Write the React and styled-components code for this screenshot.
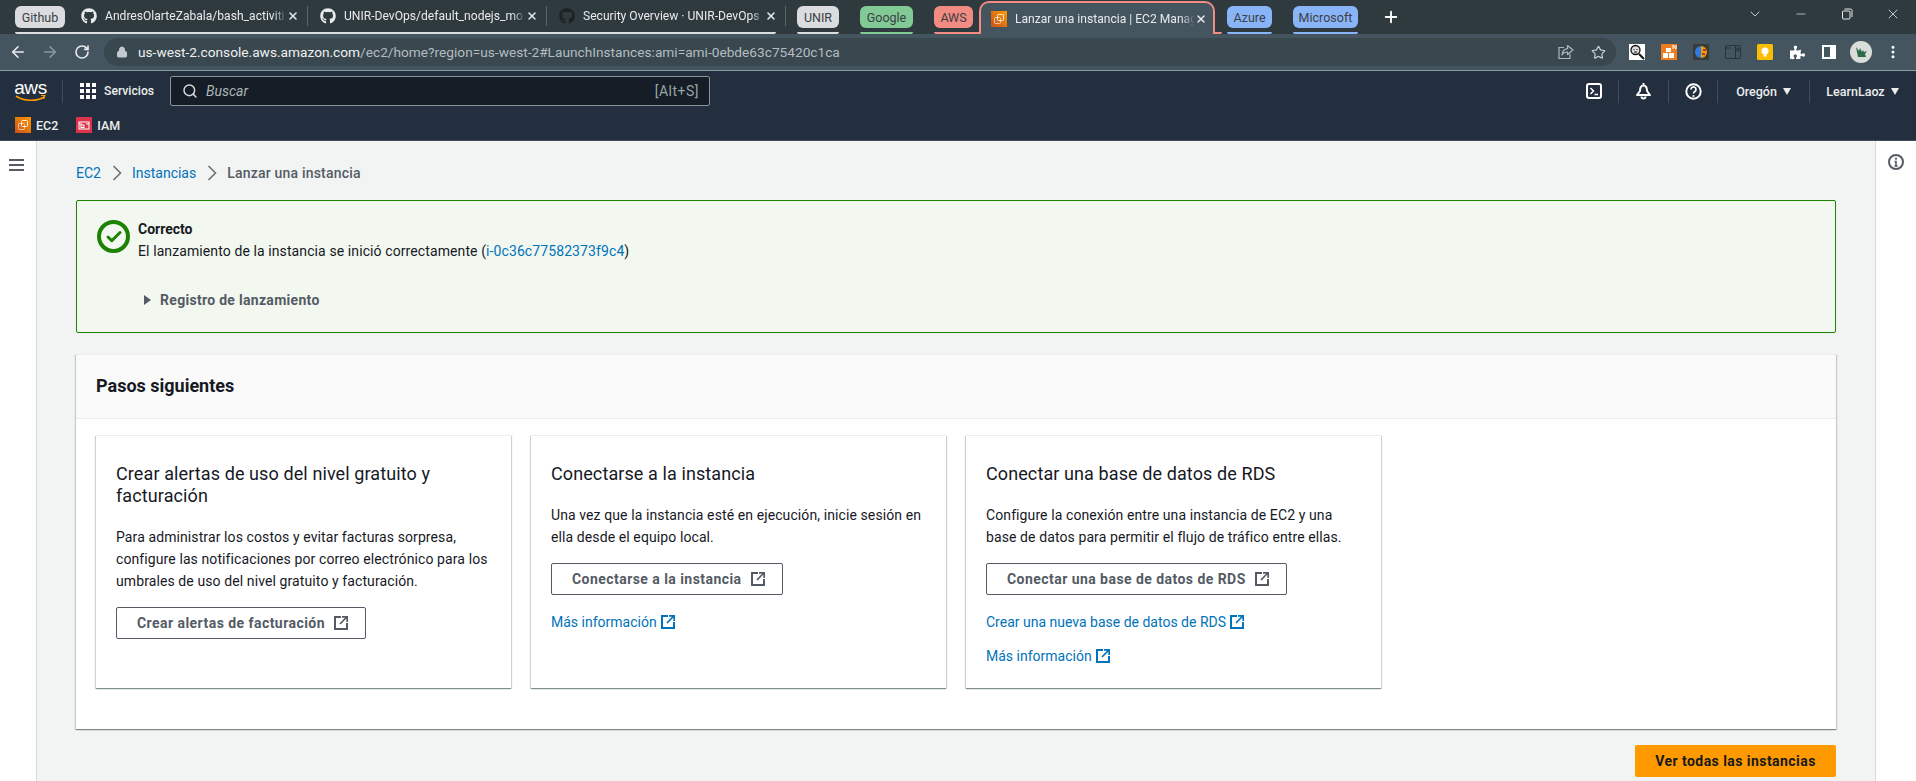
import React from 'react';
import styled, { createGlobalStyle } from 'styled-components';
import { FaGithub, FaPuzzlePiece } from 'react-icons/fa';
import {
  ArrowLeft, ArrowRight, RotateCw, Lock, Star, X, Plus, ChevronDown,
  Minus, Search, MoreVertical, Check,
} from 'lucide-react';

const GlobalStyle = createGlobalStyle`
  html, body {
    margin: 0;
    height: 100%;
    overflow: hidden;
    background: #f2f3f3;
    font-family: Roboto, "Noto Sans", Arial, sans-serif;
    color: #16191f;
  }
  * { box-sizing: border-box; }
`;

/* ---------- browser tabs ---------- */

const TabStrip = styled.div`
  display: flex;
  align-items: stretch;
  height: 34px;
  padding-left: 15px;
  background: #2f3a3f;
`;

const Group = styled.div`
  display: flex;
  align-items: flex-start;
  height: 34px;
  margin-left: ${(p) => p.$ml || 0}px;
  border-bottom: 2px solid ${(p) => p.$line};
  border-radius: 0 0 2px 2px;
`;

const Chip = styled.span`
  display: flex;
  align-items: center;
  justify-content: center;
  width: ${(p) => p.$w}px;
  height: 22px;
  margin-top: 6px;
  border-radius: 6px;
  background: ${(p) => p.$bg};
  color: #3c4043;
  font-size: 12.5px;
  white-space: nowrap;
`;

const Tab = styled.div`
  display: flex;
  flex: none;
  align-items: center;
  width: 239px;
  height: 20px;
  margin-top: 6px;
  margin-left: ${(p) => p.$ml || 0}px;
  padding: 0 8px 0 12px;
  border-right: 1px solid #5b666c;
  &:last-child { margin-right: -10px; }
`;

const TabTitle = styled.span`
  flex: 1;
  margin-left: 8px;
  overflow: hidden;
  color: #e8eaed;
  font-size: 12.1px;
  white-space: nowrap;
  -webkit-mask-image: linear-gradient(90deg, #000 calc(100% - 14px), transparent);
  mask-image: linear-gradient(90deg, #000 calc(100% - 14px), transparent);
`;

const ActiveTab = styled.div`
  display: flex;
  align-items: center;
  width: 236px;
  height: 33px;
  margin: 1px 7px -1px 6px;
  padding: 0 6px 0 10px;
  border: 2px solid #f28b82;
  border-bottom: none;
  border-radius: 10px 10px 0 0;
  background: #44555f;
`;

const NewTab = styled.span`
  display: flex;
  align-items: center;
  margin-left: 24px;
  color: #fff;
`;

const WindowControls = styled.div`
  display: flex;
  margin-left: auto;
`;

const WindowButton = styled.span`
  display: flex;
  align-items: center;
  justify-content: center;
  width: 46px;
  height: 28px;
  color: #e8eaed;
`;

/* ---------- address bar ---------- */

const Toolbar = styled.div`
  display: flex;
  align-items: center;
  height: 36px;
  padding-left: 2px;
  background: #44555f;
`;

const NavButton = styled.span`
  display: flex;
  align-items: center;
  justify-content: center;
  width: 32px;
  color: ${(p) => (p.$off ? '#8b979e' : '#e8eaed')};
`;

const UrlPill = styled.div`
  display: flex;
  flex: 1;
  align-items: center;
  height: 28px;
  margin-left: 6px;
  padding: 0 2px 0 12px;
  border-radius: 14px;
  background: #39474e;
`;

const Url = styled.span`
  flex: 1;
  margin-left: 10px;
  color: #b4bcc1;
  font-size: 13.7px;
  white-space: nowrap;
  b { color: #eef0f1; font-weight: 400; }
`;

const PillIcon = styled.span`
  display: flex;
  justify-content: center;
  width: 32px;
  color: #c3cacd;
`;

const Extensions = styled.div`
  display: flex;
  align-items: center;
  margin: 0 7px 0 5px;
`;

const ExtSlot = styled.span`
  display: flex;
  align-items: center;
  justify-content: center;
  width: 32px;
  height: 28px;
  color: #fff;
`;

/* ---------- aws console header ---------- */

const TopLine = styled.div`
  height: 1px;
  background: #8d9ba3;
`;

const ConsoleNav = styled.div`
  display: flex;
  align-items: center;
  height: 41px;
  padding: 0 0 1px 15px;
  background: #232f3e;
`;

const LogoBox = styled.div`
  display: flex;
  flex-direction: column;
  align-items: center;
  width: 31px;
  color: #fff;
  font: 400 19px/13px "Liberation Sans", Arial, sans-serif;
  letter-spacing: -0.4px;
  svg { margin-top: 1px; }
`;

const NavDivider = styled.span`
  width: 1px;
  height: 23px;
  margin: 0 17px 0 16px;
  background: #414d5c;
`;

const ServicesLink = styled.span`
  display: flex;
  align-items: center;
  gap: 8px;
  width: 90px;
  color: #eaeded;
  font-size: 12.2px;
  font-weight: 500;
`;

const SearchBox = styled.div`
  display: flex;
  align-items: center;
  width: 540px;
  height: 30px;
  padding: 0 10px 0 11px;
  border: 1px solid #879596;
  border-radius: 2px;
  background: #161d26;
  color: #d5dbdb;
`;

const SearchHint = styled.span`
  flex: 1;
  margin-left: 8px;
  color: #aab7b8;
  font-size: 14px;
  font-style: italic;
`;

const Shortcut = styled.span`
  color: #95a5a6;
  font-size: 14px;
  letter-spacing: 0.5px;
`;

const NavRight = styled.div`
  display: flex;
  align-items: center;
  margin-left: auto;
`;

const NavCell = styled.span`
  display: flex;
  align-items: center;
  justify-content: center;
  gap: ${(p) => p.$gap || 0}px;
  width: ${(p) => p.$w}px;
  height: 23px;
  border-right: 1px solid ${(p) => (p.$last ? 'transparent' : '#414d5c')};
  color: #eaeded;
  font-size: 12.5px;
  font-weight: 500;
`;

const Caret = styled.span`
  width: 0;
  height: 0;
  border-top: 7px solid #eaeded;
  border-left: 4px solid transparent;
  border-right: 4px solid transparent;
`;

const BookmarkBar = styled.div`
  display: flex;
  align-items: center;
  gap: 18px;
  height: 29px;
  padding: 0 0 2px 15px;
  background: #232f3e;
  border-bottom: 1px solid #414d5c;
`;

const Bookmark = styled.span`
  display: flex;
  align-items: center;
  gap: 5px;
  color: #eaeded;
  font-size: 12.5px;
  font-weight: 500;
`;

/* ---------- page body ---------- */

const Body = styled.div`
  display: grid;
  grid-template-columns: 37px 1fr 41px;
  height: 640px;
`;

const Rail = styled.aside`
  display: flex;
  justify-content: center;
  padding-top: ${(p) => p.$top}px;
  padding-right: ${(p) => p.$pr || 0}px;
  background: #fff;
  border-${(p) => p.$side}: 1px solid #d5dbdb;
  color: #545b64;
`;

const Main = styled.main`
  padding: 23px 39px 0 39px;
  background: #f2f3f3;
`;

const Breadcrumbs = styled.nav`
  display: flex;
  align-items: center;
  height: 18px;
  color: #545b64;
  font-size: 14px;
  svg { margin: 0 10px 0 11px; }
`;

const Crumb = styled.span`
  color: ${(p) => (p.$current ? '#545b64' : '#0073bb')};
  font-weight: ${(p) => (p.$current ? 500 : 400)};
  letter-spacing: ${(p) => (p.$current ? 0.2 : 0)}px;
`;

const Alert = styled.section`
  display: flex;
  gap: 8px;
  height: 133px;
  margin-top: 18px;
  padding: 18px 20px 0 20px;
  border: 1px solid #1d8102;
  border-radius: 2px;
  background: #f2f8f0;
`;

const SuccessIcon = styled.span`
  display: flex;
  flex: none;
  align-items: center;
  justify-content: center;
  width: 33px;
  height: 33px;
  margin-top: 1px;
  border: 4px solid #1d8102;
  border-radius: 50%;
  color: #1d8102;
`;

const AlertTitle = styled.div`
  font-size: 14px;
  font-weight: 700;
  line-height: 20px;
`;

const AlertText = styled.div`
  margin-top: 2px;
  font-size: 14px;
  line-height: 20px;
  letter-spacing: 0.1px;
`;

const Expander = styled.div`
  display: flex;
  align-items: center;
  gap: 9px;
  margin: 29px 0 0 6px;
  color: #545b64;
  font-size: 14px;
  font-weight: 700;
  line-height: 20px;
  letter-spacing: 0.3px;
`;

const ExpandCaret = styled.span`
  width: 0;
  height: 0;
  border-left: 7px solid #545b64;
  border-top: 5px solid transparent;
  border-bottom: 5px solid transparent;
`;

const A = styled.span`
  color: #0073bb;
`;

const shadow = `0 1px 1px 0 rgba(0, 28, 36, 0.3), 1px 1px 1px 0 rgba(0, 28, 36, 0.15), -1px 1px 1px 0 rgba(0, 28, 36, 0.15)`;

const Panel = styled.section`
  height: 375px;
  margin-top: 21px;
  border-top: 1px solid #eaeded;
  background: #fff;
  box-shadow: ${shadow};
`;

const PanelHeader = styled.header`
  display: flex;
  align-items: center;
  height: 64px;
  padding: 0 0 3px 20px;
  border-bottom: 1px solid #eaeded;
  background: #fafafa;
  font-size: 18px;
  font-weight: 700;
`;

const CardGrid = styled.div`
  display: grid;
  grid-template-columns: repeat(4, 1fr);
  gap: 20px;
  padding: 16px 20px 0;
`;

const Card = styled.article`
  height: 253px;
  padding: 27px 20px 0;
  border-top: 1px solid #eaeded;
  background: #fff;
  box-shadow: ${shadow};
`;

const CardTitle = styled.h3`
  margin: 0;
  font-size: 18px;
  font-weight: 400;
  line-height: 22px;
  letter-spacing: 0.1px;
`;

const CardText = styled.p`
  margin: 19px 0 15px;
  font-size: 14px;
  line-height: 22px;
  letter-spacing: 0.1px;
`;

const OutlineButton = styled.span`
  display: inline-flex;
  align-items: center;
  gap: 8px;
  height: 32px;
  padding: 0 16px 0 20px;
  border: 1px solid #545b64;
  border-radius: 2px;
  color: #545b64;
  font-size: 14px;
  font-weight: 700;
  letter-spacing: 0.45px;
`;

const CardLink = styled.div`
  display: flex;
  align-items: center;
  gap: 3px;
  height: 22px;
  margin-top: ${(p) => p.$mt}px;
  color: #0073bb;
  font-size: 14px;
`;

const Footer = styled.div`
  display: flex;
  justify-content: flex-end;
  margin-top: 16px;
`;

const PrimaryButton = styled.span`
  display: flex;
  align-items: center;
  justify-content: center;
  width: 201px;
  height: 32px;
  border-radius: 2px;
  background: #ff9900;
  color: #16191f;
  font-size: 14px;
  font-weight: 700;
  letter-spacing: 0.45px;
`;

/* ---------- drawn icons ---------- */

const External = ({ color = '#545b64' }) => (
  <svg width="16" height="16" viewBox="0 0 16 16" fill="none" stroke={color} strokeWidth="2">
    <path d="M8 2H2v12h12V8" />
    <path d="M7 9l6.300-6.500M9 1.800h5.200V7" strokeWidth="1.700" />
  </svg>
);

const Ec2Glyph = () => (
  <svg width="16" height="16" viewBox="0 0 16 16">
    <defs>
      <linearGradient id="ec2grad" x1="0" y1="1" x2="1" y2="0">
        <stop offset="0" stopColor="#c8511b" />
        <stop offset="1" stopColor="#ff9900" />
      </linearGradient>
    </defs>
    <rect width="16" height="16" fill="url(#ec2grad)" />
    <g fill="none" stroke="#fff" strokeOpacity="0.85" strokeWidth="1">
      <rect x="6.500" y="3.500" width="6" height="6" rx="1" />
      <rect x="3.500" y="6.500" width="6" height="6" rx="1" strokeOpacity="0.6" />
    </g>
  </svg>
);

const IamGlyph = () => (
  <svg width="16" height="16" viewBox="0 0 16 16">
    <rect width="16" height="16" fill="#dd344c" />
    <g fill="none" stroke="#fff" strokeWidth="1">
      <rect x="3" y="5" width="10" height="7" />
      <path d="M3 7h3M10 7h3" />
      <rect x="5" y="8" width="3" height="2.500" />
    </g>
  </svg>
);

const GridIcon = () => (
  <svg width="16" height="16" viewBox="0 0 16 16" fill="#fff">
    {[0, 6, 12].map((y) =>
      [0, 6, 12].map((x) => <rect key={`${x}-${y}`} x={x} y={y} width="4" height="4" />)
    )}
  </svg>
);

const AwsLogo = () => (
  <LogoBox>
    aws
    <svg width="31" height="7" viewBox="0 0 31 7" fill="none">
      <path d="M1 1c7 5 20 6 28 1" stroke="#ff9900" strokeWidth="1.600" />
      <path d="M26 .5l4-.2-1.400 3.700" stroke="#ff9900" strokeWidth="1.200" />
    </svg>
  </LogoBox>
);

const TerminalIcon = () => (
  <svg width="16" height="18" viewBox="0 0 16 18" fill="none" stroke="#fff" strokeWidth="2">
    <rect x="1" y="2" width="14" height="14" rx="2" />
    <path d="M4.500 6l3 3-3 3M8.500 12.500h3.500" strokeWidth="1.500" />
  </svg>
);

const BellIcon = () => (
  <svg width="17" height="18" viewBox="0 0 17 18" fill="none" stroke="#fff" strokeWidth="2">
    <path d="M8.500 1v1.500M5 9c0-4 1.500-5.500 3.500-5.500S12 5 12 9l3 4H2z" strokeLinejoin="round" />
    <path d="M6.500 14.500a2 2 0 0 0 4 0" />
  </svg>
);

const HelpIcon = () => (
  <svg width="17" height="17" viewBox="0 0 17 17" fill="none" stroke="#fff" strokeWidth="2">
    <circle cx="8.500" cy="8.500" r="7.200" />
    <path d="M6 6.500a2.500 2.500 0 1 1 3.800 2.100c-.9.500-1.300 1-1.300 1.900" strokeWidth="1.700" />
    <circle cx="8.500" cy="13" r="1" fill="#fff" stroke="none" />
  </svg>
);

const InfoIcon = () => (
  <svg width="16" height="16" viewBox="0 0 16 16" fill="none" stroke="#545b64" strokeWidth="2">
    <circle cx="8" cy="8" r="7" />
    <path d="M6.500 7.500H8V12M6.500 12h3.200" strokeWidth="1.600" />
    <circle cx="8" cy="4.700" r="1.100" fill="#545b64" stroke="none" />
  </svg>
);

const Hamburger = () => (
  <svg width="15" height="12" viewBox="0 0 15 12" fill="#545b64">
    <rect width="15" height="2" />
    <rect y="5" width="15" height="2" />
    <rect y="10" width="15" height="2" />
  </svg>
);

const Crumbline = () => (
  <svg width="10" height="16" viewBox="0 0 10 16" fill="none" stroke="#687078" strokeWidth="1.600">
    <path d="M1.500 1l7 7-7 7" />
  </svg>
);

const ShareIcon = () => (
  <svg width="16" height="16" viewBox="0 0 16 16" fill="none" stroke="#aeb7bb" strokeWidth="1.200">
    <path d="M6 3.500H1v11h11V10" />
    <path d="M9.500 1.500L15 6l-5.500 4.500V8C7 8 5 9 4 11c.3-3.500 2.500-6 5.500-6.300z" strokeLinejoin="round" />
  </svg>
);

const MagnifierExt = () => (
  <svg width="16" height="16" viewBox="0 0 16 16">
    <rect width="16" height="16" fill="#fff" />
    <circle cx="6.500" cy="6" r="4.500" fill="#ddd" stroke="#111" strokeWidth="1.300" />
    <path d="M4.500 5.500h1M7.500 5.500h1M5 8h3" stroke="#111" />
    <path d="M10 10l5 5" stroke="#111" strokeWidth="2" />
  </svg>
);

const BlocksExt = () => (
  <svg width="16" height="16" viewBox="0 0 16 16">
    <rect width="16" height="16" fill="#ee7d1e" />
    <path d="M2 9h5v5H2zM8 9h5v5H8zM5 4h5v4H5z" fill="#fff" />
    <path d="M12 1v4M12 1l3 4M15 1v4" stroke="#fff" fill="none" />
  </svg>
);

const BrainExt = () => (
  <svg width="16" height="16" viewBox="0 0 16 16">
    <rect width="16" height="16" fill="#3a3a3a" />
    <path d="M8 2a6 6 0 0 0 0 12z" fill="#2f7de1" />
    <path d="M8 2a6 6 0 0 1 0 12z" fill="#e8a30c" />
    <path d="M10 5h3v2h-3zM9 9h3v2H9z" fill="#c8321e" />
  </svg>
);

const PanelExt = () => (
  <svg width="16" height="14" viewBox="0 0 16 14" fill="none" stroke="#27323a">
    <rect x=".5" y=".5" width="15" height="13" rx="1" />
    <path d="M10.500 1v12M1 3h5M12 3h2v3h-2z" />
  </svg>
);

const BulbExt = () => (
  <svg width="16" height="16" viewBox="0 0 16 16">
    <rect width="16" height="16" rx="1.500" fill="#fbbc04" />
    <circle cx="8" cy="7" r="3.500" fill="#fff" />
    <rect x="6.500" y="10.500" width="3" height="2" fill="#fff" />
  </svg>
);

const SidePanelIcon = () => (
  <svg width="14" height="14" viewBox="0 0 14 14">
    <path fillRule="evenodd" d="M0 0h14v14H0zM2 2v10h6V2z" fill="#fff" />
  </svg>
);

const Avatar = () => (
  <svg width="22" height="22" viewBox="0 0 22 22">
    <circle cx="11" cy="11" r="11" fill="#d9dedb" />
    <path d="M6 6l3 4 1-3 2 4 1-2 1 2 3-1-2 3 1 3H8z" fill="#2c6b45" />
  </svg>
);

const Restore = () => (
  <svg width="12" height="12" viewBox="0 0 12 12" fill="none" stroke="#e8eaed">
    <rect x="1.500" y="3" width="7.500" height="8" rx="1" />
    <path d="M3.500 1h6a1.500 1.500 0 0 1 1.500 1.500V9" />
  </svg>
);

const Close = () => <X size={12} color="#e8eaed" strokeWidth={3} />;

const App = () => (
  <>
    <GlobalStyle />
    <TabStrip>
      <Group $line="#dadce0">
        <Chip $bg="#dadce0" $w={50}>Github</Chip>
        <Tab $ml={4}>
          <FaGithub size={16} color="#e8eaed" />
          <TabTitle>AndresOlarteZabala/bash_activiti</TabTitle>
          <Close />
        </Tab>
        <Tab>
          <FaGithub size={16} color="#e8eaed" />
          <TabTitle>UNIR-DevOps/default_nodejs_mo</TabTitle>
          <Close />
        </Tab>
        <Tab>
          <FaGithub size={16} color="#1c2327" />
          <TabTitle>Security Overview · UNIR-DevOps</TabTitle>
          <Close />
        </Tab>
      </Group>
      <Group $line="#dadce0" $ml={21}>
        <Chip $bg="#dadce0" $w={42}>UNIR</Chip>
      </Group>
      <Group $line="#81c995" $ml={21}>
        <Chip $bg="#81c995" $w={53}>Google</Chip>
      </Group>
      <Group $line="#f28b82" $ml={21}>
        <Chip $bg="#f28b82" $w={39}>AWS</Chip>
        <ActiveTab>
          <Ec2Glyph />
          <TabTitle>Lanzar una instancia | EC2 Manag</TabTitle>
          <Close />
        </ActiveTab>
      </Group>
      <Group $line="#8ab4f8" $ml={5}>
        <Chip $bg="#8ab4f8" $w={45}>Azure</Chip>
      </Group>
      <Group $line="#8ab4f8" $ml={21}>
        <Chip $bg="#8ab4f8" $w={65}>Microsoft</Chip>
      </Group>
      <NewTab>
        <Plus size={18} strokeWidth={2.5} />
      </NewTab>
      <WindowControls>
        <WindowButton><ChevronDown size={16} strokeWidth={1.2} /></WindowButton>
        <WindowButton><Minus size={14} strokeWidth={1.2} /></WindowButton>
        <WindowButton><Restore /></WindowButton>
        <WindowButton><X size={16} strokeWidth={1.2} /></WindowButton>
      </WindowControls>
    </TabStrip>

    <Toolbar>
      <NavButton><ArrowLeft size={18} strokeWidth={2.2} /></NavButton>
      <NavButton $off><ArrowRight size={18} strokeWidth={2.2} /></NavButton>
      <NavButton><RotateCw size={16} strokeWidth={2.4} /></NavButton>
      <UrlPill>
        <Lock size={12} color="#c3cacd" fill="#c3cacd" />
        <Url><b>us-west-2.console.aws.amazon.com</b>/ec2/home?region=us-west-2#LaunchInstances:ami=ami-0ebde63c75420c1ca</Url>
        <PillIcon><ShareIcon /></PillIcon>
        <PillIcon><Star size={15} /></PillIcon>
      </UrlPill>
      <Extensions>
        <ExtSlot><MagnifierExt /></ExtSlot>
        <ExtSlot><BlocksExt /></ExtSlot>
        <ExtSlot><BrainExt /></ExtSlot>
        <ExtSlot><PanelExt /></ExtSlot>
        <ExtSlot><BulbExt /></ExtSlot>
        <ExtSlot><FaPuzzlePiece size={15} /></ExtSlot>
        <ExtSlot><SidePanelIcon /></ExtSlot>
        <ExtSlot><Avatar /></ExtSlot>
        <ExtSlot><MoreVertical size={16} strokeWidth={2.5} /></ExtSlot>
      </Extensions>
    </Toolbar>
    <TopLine />

    <ConsoleNav>
      <AwsLogo />
      <NavDivider />
      <ServicesLink><GridIcon />Servicios</ServicesLink>
      <SearchBox>
        <Search size={16} strokeWidth={2.2} />
        <SearchHint>Buscar</SearchHint>
        <Shortcut>[Alt+S]</Shortcut>
      </SearchBox>
      <NavRight>
        <NavCell $w={49}><TerminalIcon /></NavCell>
        <NavCell $w={50}><BellIcon /></NavCell>
        <NavCell $w={49}><HelpIcon /></NavCell>
        <NavCell $w={92} $gap={6}>Oregón<Caret /></NavCell>
        <NavCell $w={106} $gap={6} $last>LearnLaoz<Caret /></NavCell>
      </NavRight>
    </ConsoleNav>
    <BookmarkBar>
      <Bookmark><Ec2Glyph />EC2</Bookmark>
      <Bookmark><IamGlyph />IAM</Bookmark>
    </BookmarkBar>

    <Body>
      <Rail $side="right" $top={15} $pr={4}><div><Hamburger /></div></Rail>
      <Main>
        <Breadcrumbs>
          <Crumb>EC2</Crumb>
          <Crumbline />
          <Crumb>Instancias</Crumb>
          <Crumbline />
          <Crumb $current>Lanzar una instancia</Crumb>
        </Breadcrumbs>

        <Alert>
          <SuccessIcon><Check size={18} strokeWidth={4} /></SuccessIcon>
          <div>
            <AlertTitle>Correcto</AlertTitle>
            <AlertText>
              El lanzamiento de la instancia se inició correctamente (<A>i-0c36c77582373f9c4</A>)
            </AlertText>
            <Expander><ExpandCaret />Registro de lanzamiento</Expander>
          </div>
        </Alert>

        <Panel>
          <PanelHeader>Pasos siguientes</PanelHeader>
          <CardGrid>
            <Card>
              <CardTitle>Crear alertas de uso del nivel gratuito y facturación</CardTitle>
              <CardText>
                Para administrar los costos y evitar facturas sorpresa, configure las notificaciones por correo
                electrónico para los umbrales de uso del nivel gratuito y facturación.
              </CardText>
              <OutlineButton>Crear alertas de facturación <External /></OutlineButton>
            </Card>
            <Card>
              <CardTitle>Conectarse a la instancia</CardTitle>
              <CardText>
                Una vez que la instancia esté en ejecución, inicie sesión en ella desde el equipo local.
              </CardText>
              <OutlineButton>Conectarse a la instancia <External /></OutlineButton>
              <CardLink $mt={16}>Más información <External color="#0073bb" /></CardLink>
            </Card>
            <Card>
              <CardTitle>Conectar una base de datos de RDS</CardTitle>
              <CardText>
                Configure la conexión entre una instancia de EC2 y una base de datos para permitir el flujo de
                tráfico entre ellas.
              </CardText>
              <OutlineButton>Conectar una base de datos de RDS <External /></OutlineButton>
              <CardLink $mt={16}>Crear una nueva base de datos de RDS <External color="#0073bb" /></CardLink>
              <CardLink $mt={12}>Más información <External color="#0073bb" /></CardLink>
            </Card>
          </CardGrid>
        </Panel>

        <Footer><PrimaryButton>Ver todas las instancias</PrimaryButton></Footer>
      </Main>
      <Rail $side="left" $top={13}><div><InfoIcon /></div></Rail>
    </Body>
  </>
);

export default App;
